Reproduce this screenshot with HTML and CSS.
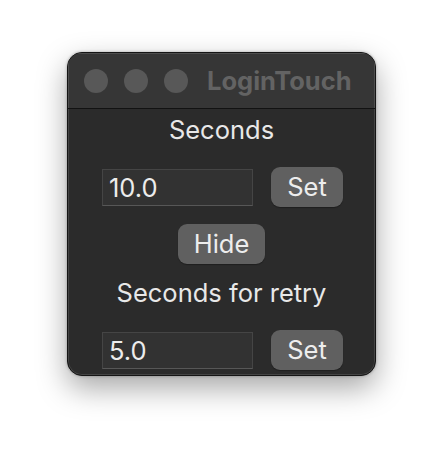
FILE: index.html
```html
<!DOCTYPE html>
<html>
<head>
<meta charset="utf-8">
<link rel="stylesheet" href="styles.css">
</head>
<body>
<div class="window">
  <div class="titlebar">
    <span class="light"></span>
    <span class="light"></span>
    <span class="light"></span>
    <span class="title">LoginTouch</span>
  </div>
  <div class="content">
    <div class="label label-first">Seconds</div>
    <div class="row row-first">
      <div class="field">10.0</div>
      <div class="button set">Set</div>
    </div>
    <div class="button hide">Hide</div>
    <div class="label label-second">Seconds for retry</div>
    <div class="row row-second">
      <div class="field">5.0</div>
      <div class="button set">Set</div>
    </div>
  </div>
</div>
</body>
</html>
```

FILE: styles.css
```css
html, body {
  margin: 0;
  padding: 0;
  background: #ffffff;
}
body {
  width: 444px;
  height: 460px;
  padding: 52px 0 0 67px;
  box-sizing: border-box;
  font-family: Inter, "Noto Sans", sans-serif;
}
.window {
  width: 309px;
  height: 324px;
  box-sizing: border-box;
  border: 1px solid #151515;
  border-radius: 15px;
  background: #2b2b2b;
  box-shadow: inset 0 0 0 1px rgba(255,255,255,0.12), 0 12px 30px rgba(0,0,0,0.35), 0 0 3px rgba(0,0,0,0.3);
  overflow: hidden;
  display: flex;
  flex-direction: column;
}
.titlebar {
  height: 55px;
  flex: none;
  background: #363636;
  border-bottom: 1px solid #121212;
  display: flex;
  align-items: center;
  padding-left: 16px;
  box-shadow: inset 0 1px 0 rgba(255,255,255,0.12), inset 1px 0 0 rgba(255,255,255,0.12), inset -1px 0 0 rgba(255,255,255,0.12);
}
.light {
  width: 24px;
  height: 24px;
  border-radius: 50%;
  background: #585858;
  margin-right: 16px;
  flex: none;
}
.light:nth-of-type(3) {
  margin-right: 19px;
}
.title {
  font-weight: 700;
  font-size: 25.5px;
  line-height: 30px;
  color: #636363;
  white-space: nowrap;
}
.content {
  display: flex;
  flex-direction: column;
  align-items: center;
  padding-top: 6px;
}
.label {
  font-size: 25.5px;
  line-height: 30px;
  color: #e8e8e8;
}
.row {
  align-self: stretch;
  display: flex;
  align-items: center;
  gap: 18px;
  padding-left: 34px;
}
.row-first {
  margin-top: 22px;
}
.row-second {
  margin-top: 22px;
}
.field {
  width: 151px;
  height: 37px;
  box-sizing: border-box;
  background: #323232;
  border: 1px solid #454545;
  border-bottom-color: #575757;
  color: #ececec;
  font-size: 25.5px;
  line-height: 35px;
  padding-left: 6px;
}
.button {
  height: 40px;
  box-sizing: border-box;
  border-radius: 9px;
  background: #606060;
  color: #ededed;
  font-size: 25.5px;
  line-height: 40px;
  text-align: center;
  box-shadow: 0 1px 1px rgba(0,0,0,0.3);
}
.set {
  width: 72px;
}
.hide {
  width: 87px;
  margin-top: 17px;
}
.label-second {
  margin-top: 14px;
}
```
